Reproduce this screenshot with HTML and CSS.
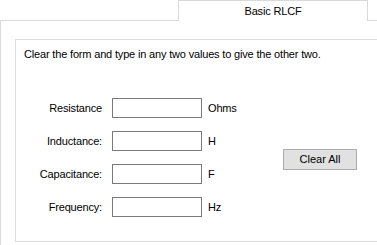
FILE: index.html
```html
<!DOCTYPE html>
<html lang="en">
<head>
    <meta charset="UTF-8">
    <title>Basic RLCF</title>
    <link rel="stylesheet" href="styles.css">
</head>
<body>
    <!-- tab strip -->
    <div class="tab-strip">
        <div class="tab-fill tab-fill-left"></div>
        <div class="tab">Basic RLCF</div>
        <div class="tab-fill"></div>
    </div>

    <div class="tab-page">
        <div class="group-box">
            <p class="hint">Clear the form and type in any two values to give the other two.</p>

            <div class="form-grid">
                <label class="field-label" for="resistance">Resistance</label>
                <input class="field-input" type="text" id="resistance">
                <span class="field-unit">Ohms</span>

                <button class="clear-button" onclick="clearFields()">Clear All</button>

                <label class="field-label" for="inductance">Inductance:</label>
                <input class="field-input" type="text" id="inductance">
                <span class="field-unit">H</span>

                <label class="field-label" for="capacitance">Capacitance:</label>
                <input class="field-input" type="text" id="capacitance">
                <span class="field-unit">F</span>

                <label class="field-label" for="frequency">Frequency:</label>
                <input class="field-input" type="text" id="frequency">
                <span class="field-unit">Hz</span>
            </div>
        </div>
    </div>

    <script>
        function clearFields() {
            document.querySelectorAll('.field-input').forEach(function (el) {
                el.value = '';
            });
        }
    </script>
</body>
</html>
```

FILE: styles.css
```css
/* common */
body {
    margin: 0;
    background-color: #ffffff;
    font-family: "Liberation Sans", Arial, sans-serif;
    font-size: 11px;
    letter-spacing: -0.17px;
    color: #000000;
    overflow: hidden;
}

/* tab strip */
.tab-strip {
    display: flex;
    height: 21px;
}
.tab-fill {
    flex: 1;
    border-bottom: 1px solid #d9d9d9;
}
.tab-fill-left {
    flex: 0 0 178px;
}
.tab {
    width: 188px;
    border: 1px solid #d9d9d9;
    border-bottom: none;
    text-align: center;
    line-height: 19px;
    padding-top: 1px;
}

/* page under the tab */
.tab-page {
    border-left: 1px solid #d9d9d9;
    padding: 18px 0 0 14px;
    height: 206px;
}
.group-box {
    border: 1px solid #dcdcdc;
    border-right: none;
    height: 193px;
    padding: 8px 0 0 8px;
}
.hint {
    margin: 0;
    line-height: 13px;
}

/* form */
.form-grid {
    display: grid;
    grid-template-columns: 88px 90px 81px auto;
    grid-auto-rows: 20px;
    row-gap: 13px;
    margin-top: 37px;
    align-items: center;
}
.field-label {
    text-align: right;
    padding-right: 10px;
}
.field-input {
    height: 20px;
    box-sizing: border-box;
    border: 1px solid #7a7a7a;
    padding: 0 2px;
    margin: 0;
    font: inherit;
}
.field-unit {
    padding-left: 6px;
}
.clear-button {
    grid-column: 4;
    grid-row: 1 / span 4;
    align-self: center;
    margin-top: 3px;
    width: 74px;
    height: 21px;
    background-color: #e1e1e1;
    border: 1px solid #adadad;
    font: inherit;
    padding: 0;
}
```
